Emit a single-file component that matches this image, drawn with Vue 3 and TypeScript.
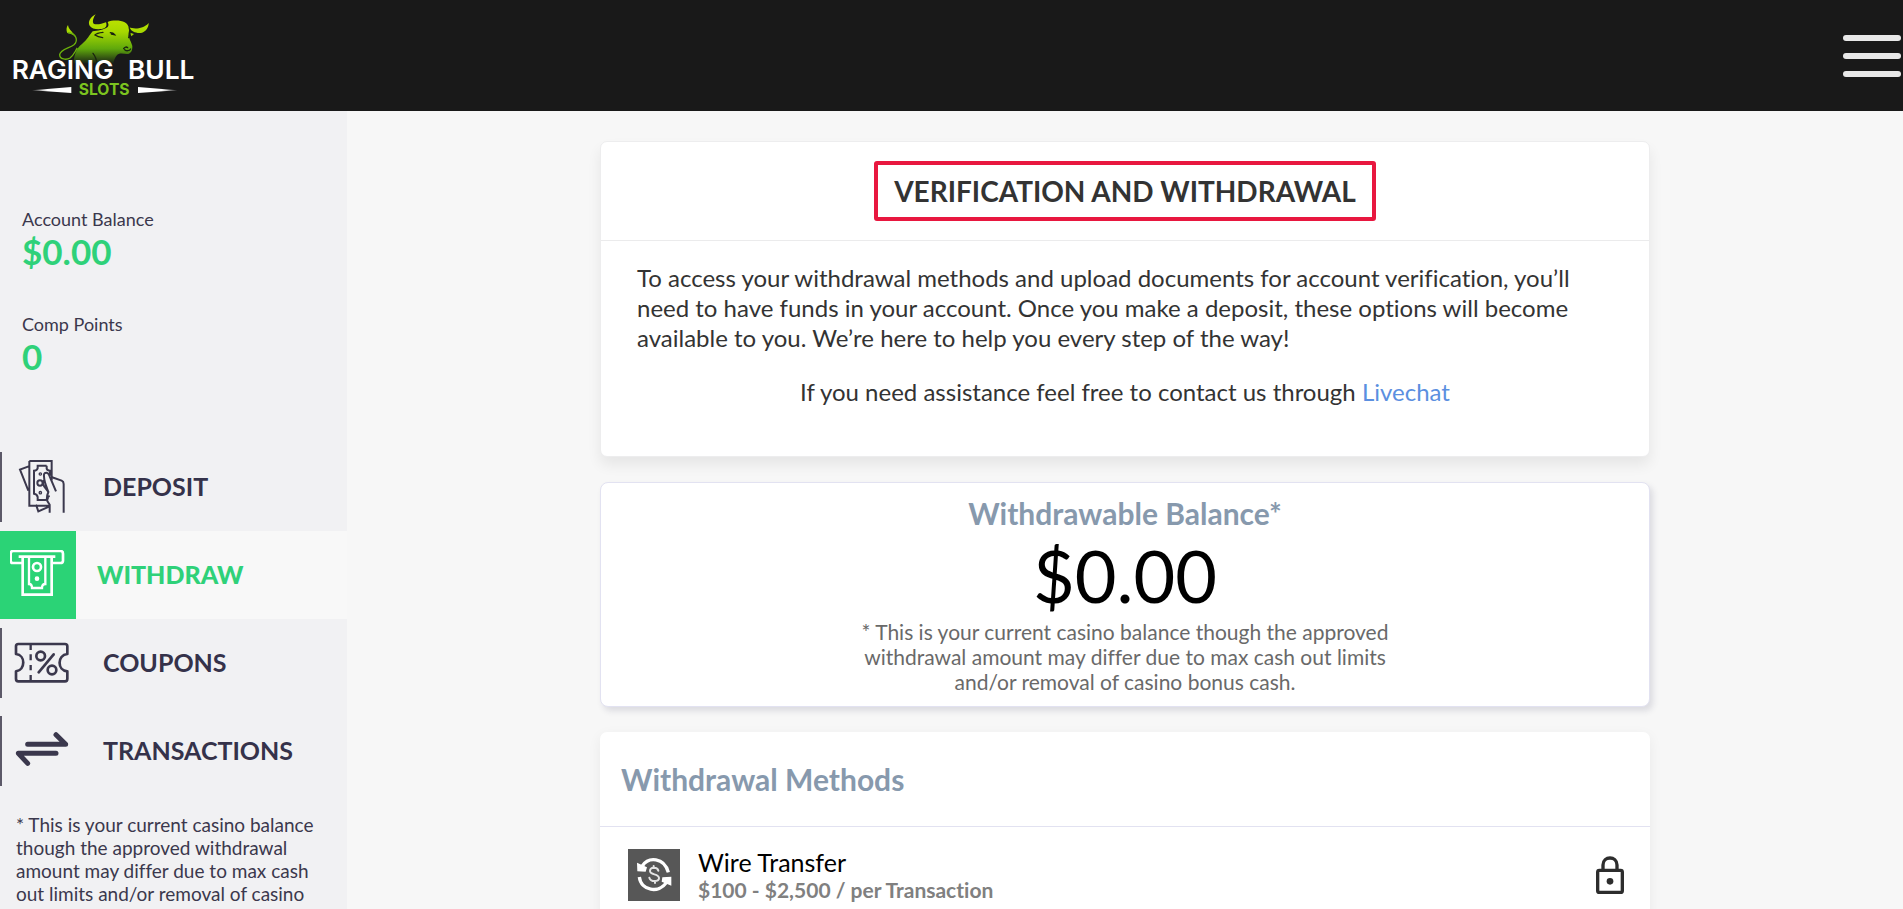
<script setup lang="ts">
interface NavItem {
  id: 'deposit' | 'withdraw' | 'coupons' | 'transactions'
  label: string
  active: boolean
}

interface Stat {
  label: string
  value: string
}

const stats: Stat[] = [
  { label: 'Account Balance', value: '$0.00' },
  { label: 'Comp Points', value: '0' },
]

const navItems: NavItem[] = [
  { id: 'deposit', label: 'DEPOSIT', active: false },
  { id: 'withdraw', label: 'WITHDRAW', active: true },
  { id: 'coupons', label: 'COUPONS', active: false },
  { id: 'transactions', label: 'TRANSACTIONS', active: false },
]

const balanceNote =
  '* This is your current casino balance though the approved withdrawal amount may differ due to max cash out limits and/or removal of casino bonus cash.'
</script>

<template>
  <div class="page">
    <header class="topbar">
      <a class="logo" href="#" aria-label="Raging Bull Slots">
        <svg width="200" height="104" viewBox="0 0 600 312" aria-hidden="true">
          <defs>
            <linearGradient id="bull" gradientUnits="userSpaceOnUse" x1="0" y1="45" x2="0" y2="190">
              <stop offset="0" stop-color="#c4e600" />
              <stop offset="0.35" stop-color="#a6d800" />
              <stop offset="0.7" stop-color="#5fa80c" />
              <stop offset="1" stop-color="#1b2416" />
            </linearGradient>
            <linearGradient id="dashLeft"><stop offset="0" stop-color="#fff" stop-opacity="0.3" /><stop offset="0.4" stop-color="#fff" /></linearGradient>
            <linearGradient id="dashRight"><stop offset="0.6" stop-color="#fff" /><stop offset="1" stop-color="#fff" stop-opacity="0.3" /></linearGradient>
          </defs>
          <g fill="url(#bull)">
            <path d="M221 190C222 166 228 146 246 132C262 119 268 106 278 94C292 92 312 90 323 81C328 75 324 69 323 66C336 60 362 60 374 67C384 73 387 80 387 92C386 100 384 104 387 112C390 122 395 130 397 138C397 148 396 157 387 161C378 164 366 158 356 162C347 166 343 178 340 190Z" />
            <path d="M287 43C270 52 263 66 269 77C276 89 301 90 314 84C321 80 320 73 318 67C304 73 287 75 281 71C276 65 280 53 287 43Z" />
            <path d="M446 69C446 82 438 96 423 99C408 101 393 94 388 82C400 88 430 88 446 69Z" />
            <path d="M390 98L402 102L394 109Z" />
            <path d="M204 75C199 82 198 91 202 99C211 101 220 103 225 111C223 97 206 92 204 75Z" />
          </g>
          <path d="M204 98C230 100 235 122 222 134C207 145 181 147 179 164C179 178 199 181 210 174C221 166 225 154 232 144" fill="none" stroke="#6cb30b" stroke-width="4" />
          <path d="M309 97C298 98 288 101 285 105C292 110 300 112 308 113M331 98C337 98 341 100 344 104L334 102M371 146C374 140 380 140 383 143M374 149C380 154 388 153 392 147M279 160C287 170 290 180 290 190M388 83C391 96 391 104 386 113" fill="none" stroke="#1a2410" stroke-width="4" stroke-linecap="round" />
          <path d="M96 271L214 261V279Z" fill="url(#dashLeft)" />
          <path d="M414 261L532 271L414 279Z" fill="url(#dashRight)" />
          <text class="logo-word" x="35" y="237">RAGING</text>
          <text class="logo-word" x="384" y="237">BULL</text>
          <text class="logo-sub" x="236" y="285">SLOTS</text>
        </svg>
      </a>
      <button class="menu" type="button" aria-label="Open menu">
        <span></span><span></span><span></span>
      </button>
    </header>

    <div class="body">
      <aside class="sidebar">
        <dl class="stats">
          <div v-for="stat in stats" :key="stat.label" class="stat">
            <dt>{{ stat.label }}</dt>
            <dd>{{ stat.value }}</dd>
          </div>
        </dl>

        <nav class="nav">
          <a
            v-for="item in navItems"
            :key="item.id"
            href="#"
            class="nav-item"
            :class="{ active: item.active }"
            :aria-current="item.active ? 'page' : undefined"
          >
            <span class="nav-icon">
              <svg v-if="item.id === 'deposit'" width="60" height="60" viewBox="14 14 180 180" fill="none" stroke="#3b384d" stroke-width="6" aria-hidden="true">
                <path d="M86 157L93 177L127 162M66 26H133V84M127 160H66V26M64 42L38 52L63 115" />
                <path d="M118 40V49C119 52 123 55 128 55V70M118 40H91V48C90 52 86 55 80 55V124C86 125 90 129 91 134V143H114C121 143 122 138 122 133L127 131" />
                <circle cx="99" cy="65" r="3.5" stroke-width="4" /><circle cx="98" cy="92" r="8" /><circle cx="99" cy="121" r="3.5" stroke-width="4" />
                <path d="M110 84C104 91 108 99 111 103L123 119C120 126 117 135 120 146L127 157V181M146 117L127 72C123 58 111 59 110 67C109 76 112 86 114 94L123 119M132 74L163 85C168 87 169 90 169 95V181" />
              </svg>
              <svg v-else-if="item.id === 'withdraw'" width="56" height="50" viewBox="3 5 168 150" fill="none" stroke="#fff" stroke-width="8" aria-hidden="true">
                <path d="M39 44H12C7 44 5 42 5 37V16C5 10 8 8 13 8H154C159 8 162 11 162 16V37C162 42 159 44 154 44H130M29 25H139" />
                <path d="M41 25V139H128V25" />
                <path d="M60 25V107C66 107 69 111 69 119H99C99 111 103 107 109 107V25" stroke-width="7" />
                <circle cx="84" cy="56" r="12" /><circle cx="84" cy="91" r="5" fill="#fff" stroke-width="4" />
              </svg>
              <svg v-else-if="item.id === 'coupons'" width="56" height="42" viewBox="0 0 168 126" fill="none" stroke="#3b384d" stroke-width="8" stroke-linejoin="round" aria-hidden="true">
                <path d="M13 6H153C158 6 160 8 160 13V36C129 39 129 86 160 88V110C160 115 158 118 153 118H13C8 118 6 115 6 110V88C35 84 35 39 6 36V13C6 8 8 6 13 6Z" />
                <path d="M50 8V24M50 37V55M50 69V85M50 99V116" stroke-width="7" />
                <circle cx="80" cy="42" r="13" stroke-width="8" /><circle cx="114" cy="84" r="13" stroke-width="8" /><path d="M119 37L74 91" stroke-width="8" stroke-linecap="round" />
              </svg>
              <svg v-else width="56" height="38" viewBox="0 6 168 114" fill="none" stroke="#3b384d" stroke-width="15" stroke-linecap="round" stroke-linejoin="round" aria-hidden="true">
                <path d="M41 43H155L126 14M126 70H13L41 100" />
              </svg>
            </span>
            <span class="nav-label">{{ item.label }}</span>
          </a>
        </nav>

        <p class="side-note">{{ balanceNote }}</p>
      </aside>

      <main class="main">
        <section class="card verify">
          <div class="verify-head">
            <h1>VERIFICATION AND WITHDRAWAL</h1>
          </div>
          <div class="verify-body">
            <p>
              To access your withdrawal methods and upload documents for account verification, you’ll
              need to have funds in your account. Once you make a deposit, these options will become
              available to you. We’re here to help you every step of the way!
            </p>
            <p class="assist">
              If you need assistance feel free to contact us through <a href="#">Livechat</a>
            </p>
          </div>
        </section>

        <section class="card balance">
          <h2>Withdrawable Balance*</h2>
          <p class="amount">$0.00</p>
          <p class="balance-note">{{ balanceNote }}</p>
        </section>

        <section class="card methods">
          <h2>Withdrawal Methods</h2>
          <div class="method">
            <svg class="method-icon" width="52" height="52" viewBox="0 0 156 156" aria-hidden="true">
              <rect width="156" height="156" fill="#575757" />
              <g fill="none" stroke="#fff" stroke-width="10">
                <path d="M43 51C61 23 108 24 121 70" />
                <path d="M34 84C39 126 93 134 115 101" />
              </g>
              <path d="M27 41L57 55L53 68L28 67ZM130 83L103 85L101 98L130 110Z" fill="#fff" />
              <path d="M91 65C88 53 66 54 66 66C66 79 93 73 93 87C93 99 68 100 64 86M77 51V57M81 96V102" fill="none" stroke="#e4e4e4" stroke-width="6" stroke-linecap="round" />
            </svg>
            <div class="method-text">
              <h3>Wire Transfer</h3>
              <p>$100 - $2,500 / per Transaction</p>
            </div>
            <svg class="lock" width="28" height="38" viewBox="0 0 84 114" fill="none" stroke="#2d2d2d" stroke-width="10" role="img" aria-label="Locked">
              <rect x="5" y="43" width="74" height="66" rx="5" />
              <path d="M21 43V27C21 -1 63 -1 63 27V43" />
              <circle cx="42" cy="76" r="10" fill="#2d2d2d" stroke="none" />
            </svg>
          </div>
        </section>
      </main>
    </div>
  </div>
</template>

<style>
body {
  margin: 0;
  background: #f7f7f7;
}
</style>

<style scoped>
.page {
  display: flex;
  flex-direction: column;
  height: 100vh;
  overflow: hidden;
  font-family: Lato, "Liberation Sans", sans-serif;
  font-variant-ligatures: none;
  color: #333;
}
h1, h2, h3, p, dl, dd {
  margin: 0;
}
a {
  text-decoration: none;
}

.topbar {
  flex: none;
  display: flex;
  justify-content: space-between;
  align-items: center;
  box-sizing: border-box;
  height: 111px;
  padding-right: 2px;
  background: #191919;
}
.logo {
  align-self: flex-start;
}
.logo svg {
  display: block;
}
.logo-word {
  font: 600 79px Inter, sans-serif;
  fill: #fff;
}
.logo-sub {
  font: 700 47px Inter, sans-serif;
  fill: #7cc41f;
}
.menu {
  display: flex;
  flex-direction: column;
  gap: 12px;
  padding: 0;
  border: 0;
  background: none;
  cursor: pointer;
}
.menu span {
  width: 58px;
  height: 6px;
  border-radius: 3px;
  background: #e8e8e8;
}

.body {
  flex: 1;
  display: flex;
  min-height: 0;
}
.sidebar {
  flex: none;
  width: 347px;
  background: #f1f1f3;
}
.stats {
  display: flex;
  flex-direction: column;
  gap: 40px;
  padding: 97px 22px 65px;
}
.stat dt {
  font-size: 18px;
  line-height: 22px;
  color: #3b384d;
}
.stat dd {
  font-size: 35px;
  line-height: 43px;
  font-weight: 700;
  color: #2fd179;
}

.nav-item {
  display: flex;
  align-items: center;
  height: 88px;
  color: #35324a;
  font-size: 25px;
  font-weight: 700;
}
.nav-item::before {
  content: "";
  width: 2px;
  height: 70px;
  background: #5c5968;
}
.nav-icon {
  display: flex;
  justify-content: center;
  align-items: center;
  width: 80px;
  height: 100%;
}
.nav-label {
  padding: 0 0 2px 21px;
}
.nav-item.active {
  background: #f8f8f8;
  color: #2fd179;
  font-weight: 900;
}
.nav-item.active::before {
  display: none;
}
.nav-item.active .nav-icon {
  width: 76px;
  background: #2bd376;
}
.side-note {
  padding: 18px 16px;
  font-size: 19px;
  line-height: 23px;
  color: #3b384d;
}

.main {
  flex: 1;
  display: flex;
  flex-direction: column;
  align-items: center;
  padding: 30px 24px 0;
}
.card {
  flex: none;
  box-sizing: border-box;
  width: 100%;
  max-width: 1050px;
  border-radius: 7px;
  background: #fff;
}
.verify {
  border: 1px solid #ededee;
  box-shadow: 0 8px 14px rgba(0, 0, 0, 0.07);
}
.verify-head {
  display: flex;
  justify-content: center;
  padding: 19px 0;
  border-bottom: 1px solid #ebebec;
}
.verify h1 {
  padding: 11px 16px 10px;
  border: 4px solid #e8173f;
  border-radius: 3px;
  font-size: 28px;
  line-height: 31px;
  font-weight: 700;
}
.verify-body {
  padding: 22px 36px 49px;
  font-size: 24px;
  line-height: 30px;
}
.assist {
  padding-top: 24px;
  text-align: center;
}
.assist a {
  color: #5b8fe0;
}

.balance {
  margin-top: 25px;
  padding: 12px 24px;
  border: 1px solid #e2e2f1;
  border-radius: 8px;
  box-shadow: 3px 4px 6px rgba(40, 40, 80, 0.13);
  text-align: center;
}
h2 {
  font-size: 30px;
  line-height: 36px;
  font-weight: 700;
  color: #8799ad;
}
.amount {
  font-size: 72px;
  line-height: 88px;
  color: #000;
}
.balance-note {
  max-width: 540px;
  margin: 0 auto;
  font-size: 21px;
  line-height: 25px;
  color: #696969;
}

.methods {
  margin-top: 25px;
  box-shadow: 0 4px 14px rgba(0, 0, 0, 0.06);
}
.methods h2 {
  padding: 29px 21px;
  border-bottom: 1px solid #e2e2f1;
}
.method {
  display: flex;
  align-items: center;
  padding: 20px 26px 20px 28px;
}
.method-icon {
  flex: none;
}
.method-text {
  flex: 1;
  padding-left: 18px;
}
.method h3 {
  font-size: 25px;
  line-height: 30px;
  font-weight: 400;
  color: #000;
}
.method p {
  font-size: 21px;
  line-height: 25px;
  font-weight: 700;
  color: #808080;
}
</style>
